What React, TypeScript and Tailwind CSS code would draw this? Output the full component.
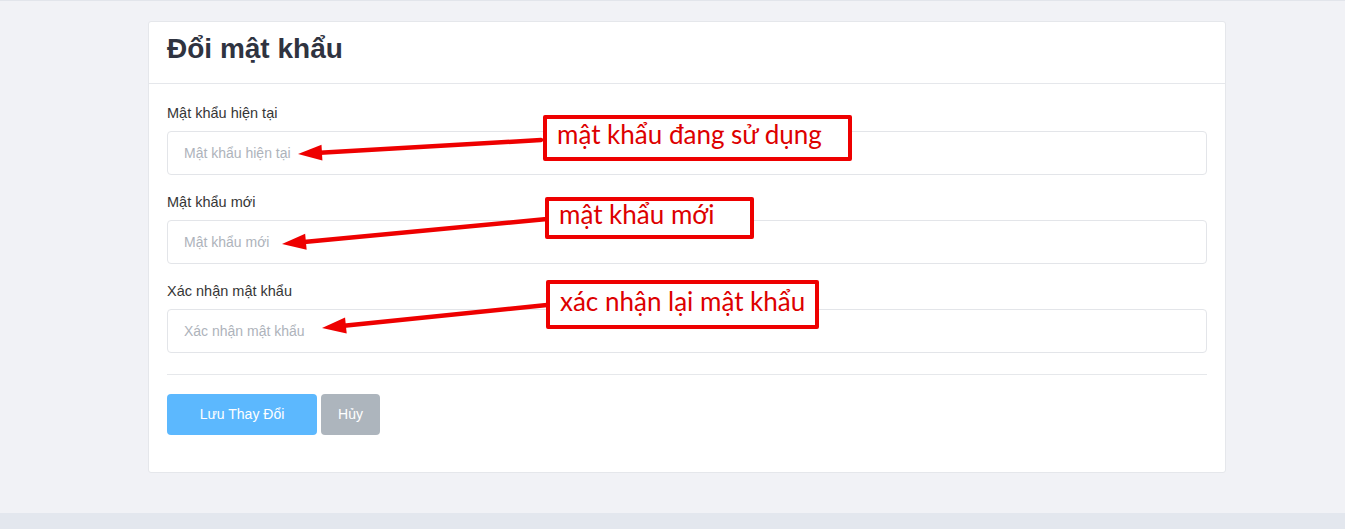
import React from 'react';

const fields = [
  { label: 'Mật khẩu hiện tại', placeholder: 'Mật khẩu hiện tại' },
  { label: 'Mật khẩu mới', placeholder: 'Mật khẩu mới' },
  { label: 'Xác nhận mật khẩu', placeholder: 'Xác nhận mật khẩu' },
];

// red callouts drawn over the form (screenshot annotations)
const notes = [
  { text: 'mật khẩu đang sử dụng', box: 'left-[543px] top-[114px] w-[309px] h-[46px]' },
  { text: 'mật khẩu mới', box: 'left-[545px] top-[196px] w-[209px] h-[42px]' },
  { text: 'xác nhận lại mật khẩu', box: 'left-[546px] top-[279px] w-[273px] h-[49px]' },
];

const arrows = [
  { x1: 541, y1: 139, x2: 298, y2: 153 },
  { x1: 547, y1: 218, x2: 282, y2: 243 },
  { x1: 547, y1: 304, x2: 322, y2: 327 },
];

const Arrow = ({ x1, y1, x2, y2 }: { x1: number; y1: number; x2: number; y2: number }) => {
  const dx = x1 - x2;
  const dy = y1 - y2;
  const len = Math.sqrt(dx * dx + dy * dy);
  const ux = dx / len;
  const uy = dy / len;
  const head = 24;
  const half = 8;
  const bx = x2 + ux * head;
  const by = y2 + uy * head;
  const p1 = `${bx - uy * half},${by + ux * half}`;
  const p2 = `${bx + uy * half},${by - ux * half}`;
  return (
    <g>
      <line x1={x1} y1={y1} x2={bx - ux * 2} y2={by - uy * 2} stroke="#ee0000" strokeWidth={4.5} strokeLinecap="round" />
      <polygon points={`${x2},${y2} ${p1} ${p2}`} fill="#ee0000" />
    </g>
  );
};

export default function App() {
  return (
    <div className="relative min-h-[529px] bg-[#f1f2f6] border-t border-[#e2e5eb] flex flex-col" style={{ fontFamily: '"Liberation Sans", Arial, sans-serif' }}>
      <div className="pt-5 pb-10">
        <div className="ml-[148px] w-[1078px] bg-white border border-[#e5e7eb] rounded-[3px]">
          {/* Header */}
          <div className="h-[62px] px-[18px] pb-2 flex items-center border-b border-[#e5e7eb]">
            <h1 className="text-[28px] font-bold text-[#2f3340] leading-none">Đổi mật khẩu</h1>
          </div>

          {/* Body */}
          <div className="px-[18px] pt-[19px] pb-[37px]">
            {fields.map((f) => (
              <div key={f.label} className="mb-[17px]">
                <label className="block text-[14.5px] leading-5 text-[#363636] mb-2">{f.label}</label>
                <input
                  type="password"
                  placeholder={f.placeholder}
                  className="w-full h-[44px] px-4 text-[14px] border border-[#e3e5e9] rounded-[4px] placeholder:text-[#aeb3bb] outline-none"
                />
              </div>
            ))}
            <div className="border-t border-[#e6e8eb] mt-[21px] mb-[19px]" />
            <div className="flex gap-1">
              <button className="w-[150px] h-[41px] rounded-[4px] bg-[#5cb8fe] text-white text-[14px]">
                Lưu Thay Đổi
              </button>
              <button className="w-[59px] h-[41px] rounded-[4px] bg-[#adb5bd] text-white text-[14px]">
                Hủy
              </button>
            </div>
          </div>
        </div>
      </div>
      <div className="flex-1 bg-[#e3e7ee]" />

      {/* annotations */}
      <svg className="absolute left-0 top-0 pointer-events-none" width={1345} height={529}>
        {arrows.map((a, i) => (
          <Arrow key={i} {...a} />
        ))}
      </svg>
      {notes.map((n) => (
        <div
          key={n.text}
          className={`absolute ${n.box} border-4 border-[#ee0000] rounded-[2px] bg-white flex items-center pl-[10px] text-[#dd0000] text-[26px] leading-none`}
          style={{ fontFamily: 'Lato, "Open Sans", sans-serif' }}
        >
          <span className="-mt-2">{n.text}</span>
        </div>
      ))}
    </div>
  );
}
